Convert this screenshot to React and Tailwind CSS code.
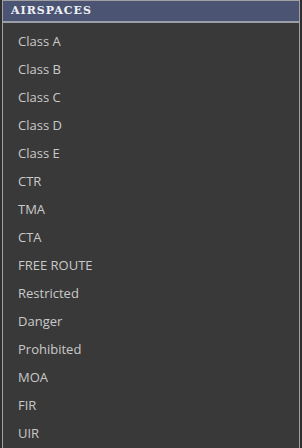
import React from 'react';

const items = [
  'Class A', 'Class B', 'Class C', 'Class D', 'Class E',
  'CTR', 'TMA', 'CTA', 'FREE ROUTE', 'Restricted',
  'Danger', 'Prohibited', 'MOA', 'FIR', 'UIR',
];

export default function App() {
  return (
    <div className="w-[302px] h-[448px] overflow-hidden bg-[#2f2f2f] pl-[2px] pr-[2px]">
      <div className="h-full flex flex-col bg-[#393939] border-x border-t border-[#a0a0a0]">
        {/* Header */}
        <div className="h-[24px] flex items-center pl-[8px] pt-[1px] bg-[#4b5573] border-b-2 border-[#9a9ea6]">
          <span
            className="text-[11px] font-bold tracking-[1px] text-[#eef0f4]"
            style={{ fontFamily: '"DejaVu Serif", serif' }}
          >
            AIRSPACES
          </span>
        </div>

        {/* List */}
        <div className="flex-1 flex flex-col pt-[5px]">
          {items.map((name) => (
            <div
              key={name}
              className="h-[28px] flex items-center pl-[15px] text-[13px] text-[#c9c9c9]"
              style={{ fontFamily: '"Open Sans", "Noto Sans", sans-serif' }}
            >
              {name}
            </div>
          ))}
        </div>
      </div>
    </div>
  );
}
